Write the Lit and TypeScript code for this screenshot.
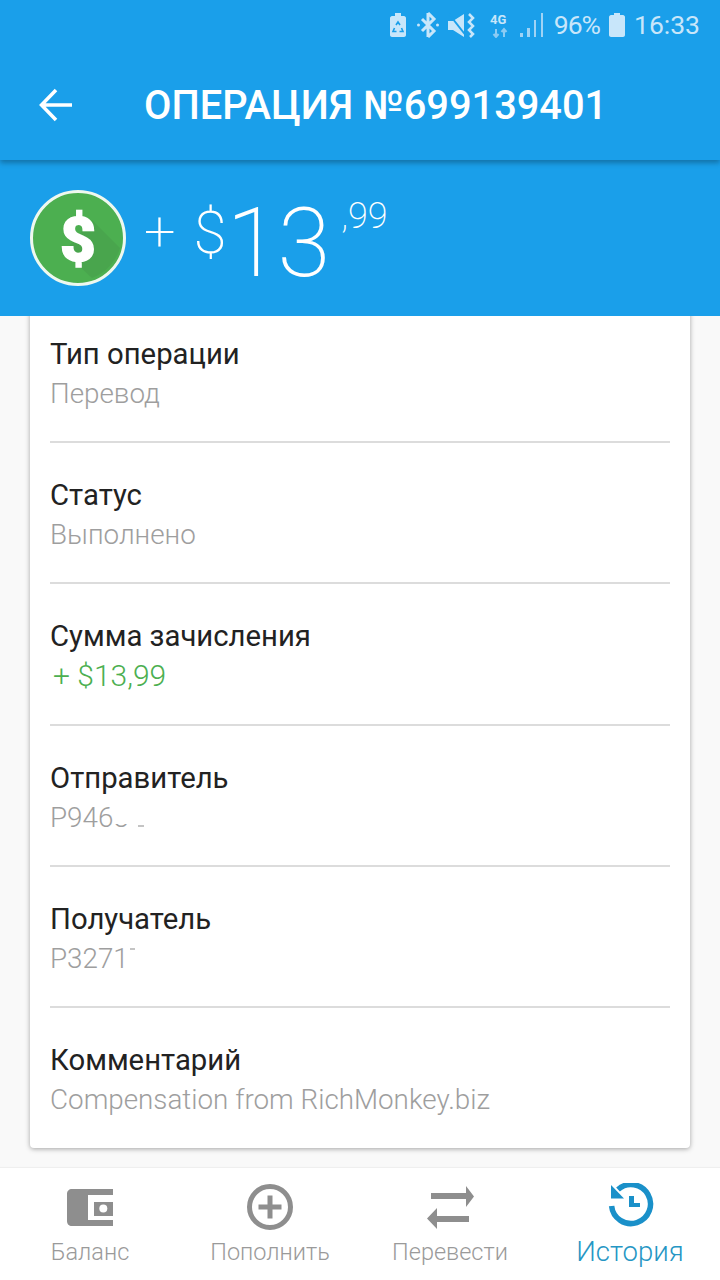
import { LitElement, html, css, svg } from 'lit';
import { customElement } from 'lit/decorators.js';

const rows = [
  { label: 'Тип операции', value: html`Перевод` },
  { label: 'Статус', value: html`Выполнено` },
  { label: 'Сумма зачисления', value: html`+ $13,99`, green: true },
  { label: 'Отправитель', value: html`P946<span class="cut-top">3</span><span class="dash"></span>` },
  { label: 'Получатель', value: html`P3271<span class="tick"></span>` },
  { label: 'Комментарий', value: html`Compensation from RichMonkey.biz` },
];

const tabs = [
  {
    label: 'Баланс',
    icon: svg`<path d="M9 6H50V12H25V37H50V43H9C6 43 4 41 4 38V11C4 8 6 6 9 6Z" fill="#8e8e8e"/><path d="M31 19H50V33H31Z" fill="#8e8e8e"/><circle cx="40.300" cy="25.500" r="4" fill="#fff"/>`,
  },
  {
    label: 'Пополнить',
    icon: svg`<circle cx="27" cy="24" r="20.500" fill="none" stroke="#8e8e8e" stroke-width="5"/><path d="M15.500 24H38.500M27 12.500V35.500" stroke="#8e8e8e" stroke-width="5"/>`,
  },
  {
    label: 'Перевести',
    icon: svg`<path d="M8 10H43V3L51 13.500 43 24V16H8Z" fill="#8e8e8e"/><path d="M46 33H14V25L4 35.500 14 46V39H46Z" fill="#8e8e8e"/>`,
  },
  {
    label: 'История',
    active: true,
    icon: svg`<path d="M15 6.500A19.500 19.500 0 1 1 8.600 23" fill="none" stroke="#1a90c9" stroke-width="5.500"/><path d="M8 2L21 15.500H8Z" fill="#1a90c9"/><path d="M26 13H31V20H37V24H26Z" fill="#1a90c9"/>`,
  },
];

@customElement('app-root')
export class AppRoot extends LitElement {
  static styles = css`
    :host {
      display: flex;
      flex-direction: column;
      height: 1280px;
      overflow: hidden;
      background: #f9f9f9;
      font-family: Roboto, sans-serif;
    }

    .top {
      position: relative;
      z-index: 2;
      height: 160px;
      flex: none;
      background: #1a9fea;
      box-shadow: 0 3px 5px rgba(0, 0, 0, 0.28);
    }

    .status {
      height: 50px;
      display: flex;
      align-items: center;
      justify-content: flex-end;
      padding-right: 20px;
      color: #c8e6fa;
      font-size: 26.500px;
      line-height: 50px;
    }

    .status svg {
      display: block;
      flex: none;
    }

    .status .pct {
      margin-left: 10px;
      letter-spacing: -1px;
    }

    .status .batt {
      margin: 0 9px;
    }

    .bar {
      height: 110px;
      display: flex;
      align-items: center;
      padding-left: 39px;
      color: #fff;
    }

    .bar h1 {
      margin: 0 0 0 71px;
      font-size: 39.800px;
      font-weight: 500;
      white-space: nowrap;
    }

    .sum {
      position: relative;
      z-index: 1;
      height: 156px;
      flex: none;
      display: flex;
      align-items: flex-start;
      padding: 30px 0 0 30px;
      background: #1a9fea;
      color: #fff;
      font-weight: 300;
      box-sizing: border-box;
    }

    .coin {
      display: block;
      flex: none;
    }

    .amount {
      display: flex;
      align-items: baseline;
      margin: 5px 0 0 18px;
      height: 96px;
      line-height: 96px;
      white-space: nowrap;
    }

    .plus {
      font-size: 56px;
      font-weight: 200;
      position: relative;
      top: -26px;
    }

    .cur {
      font-size: 60px;
      font-weight: 200;
      margin-left: 18px;
      position: relative;
      top: -23px;
    }

    .big {
      font-size: 96px;
      letter-spacing: -2px;
      font-weight: 200;
    }

    .cents {
      font-size: 36px;
      font-weight: 200;
      position: relative;
      top: -48px;
      margin-left: 13px;
    }

    main {
      flex: 1;
      min-height: 0;
      padding: 0 30px;
    }

    .card {
      margin-top: -16px;
      height: 848px;
      box-sizing: border-box;
      padding: 0 20px;
      background: #fff;
      border-radius: 4px;
      box-shadow: 0 1px 5px rgba(0, 0, 0, 0.35);
    }

    .row {
      height: 141.300px;
      box-sizing: border-box;
      padding-top: 32px;
      border-bottom: 2px solid #dcdcdc;
    }

    .row:first-child {
      height: 143px;
      padding-top: 34px;
    }

    .row:last-child {
      border-bottom: 0;
    }

    .label {
      font-size: 29.300px;
      line-height: 40px;
      color: #222;
    }

    .value {
      margin-top: 1px;
      font-size: 27.800px;
      line-height: 38px;
      font-weight: 300;
      color: #9e9e9e;
      white-space: nowrap;
    }

    .value.green {
      color: #4caf50;
      font-size: 30px;
      padding-left: 3px;
    }

    .cut-top {
      display: inline-block;
      position: relative;
      overflow: hidden;
      height: 38px;
      vertical-align: top;
    }

    .cut-top::before {
      content: '';
      position: absolute;
      left: 0;
      right: 0;
      top: 0;
      height: 25px;
      background: #fff;
    }

    .dash {
      display: inline-block;
      width: 6px;
      height: 2px;
      margin-left: 9px;
      background: #c4c4c4;
    }

    .tick {
      display: inline-block;
      width: 5px;
      height: 2px;
      margin-left: 1px;
      vertical-align: 18px;
      background: #c4c4c4;
    }

    nav {
      height: 112px;
      flex: none;
      display: grid;
      grid-template-columns: repeat(4, 1fr);
      background: #fff;
      box-shadow: 0 -1px 1px rgba(0, 0, 0, 0.04);
    }

    .tab {
      display: flex;
      flex-direction: column;
      align-items: center;
      padding-top: 15px;
      color: #9a9a9a;
      font-size: 23.500px;
      font-weight: 300;
      line-height: 34px;
      white-space: nowrap;
    }

    .tab svg {
      display: block;
      margin-bottom: 4px;
    }

    .tab.active {
      color: #2596c4;
      font-size: 27.500px;
      font-weight: 300;
    }
  `;

  private statusIcons() {
    return html`
      <svg width="16" height="24" viewBox="0 0 16 24">
        <path d="M5 0H11V3H14C15 3 16 4 16 5V22C16 23 15 24 14 24H2C1 24 0 23 0 22V5C0 4 1 3 2 3H5Z" fill="#c8e6fa"/>
        <path d="M6 12L8 9 10 12M11.500 15L13 18.500H9.500M6.500 18.500H3L4.500 15" fill="none" stroke="#1a9fea" stroke-width="1.600"/>
      </svg>
      <svg style="margin-left:11px" width="22" height="26" viewBox="0 0 22 26">
        <path d="M11 1L17 7 5 19M11 25L17 19 5 7M11 1V25" fill="none" stroke="#c8e6fa" stroke-width="3"/>
        <circle cx="1.500" cy="13" r="1.500" fill="#c8e6fa"/>
        <circle cx="20.500" cy="13" r="1.500" fill="#c8e6fa"/>
      </svg>
      <svg style="margin-left:9px" width="27" height="26" viewBox="0 0 27 26">
        <path d="M0 9H5L16 2V25L5 18H0Z" fill="#c8e6fa"/>
        <path d="M1 2L19 25" stroke="#1a9fea" stroke-width="2"/>
        <path d="M21 2L25 6 21 10 25 14 21 18 25 22 22 25" fill="none" stroke="#c8e6fa" stroke-width="2.500"/>
      </svg>
      <svg style="margin-left:15px" width="20" height="26" viewBox="0 0 20 26">
        <text x="0" y="12" font-family="Roboto" font-size="13" font-weight="700" fill="#c8e6fa">4G</text>
        <path d="M6 17V25M3.500 22L6 25 8.500 22" fill="none" stroke="#8ccbf3" stroke-width="2"/>
        <path d="M14 25V17M11.500 20L14 17 16.500 20" fill="none" stroke="#8ccbf3" stroke-width="2"/>
      </svg>
      <svg style="margin-left:10px" width="24" height="24" viewBox="0 0 24 24">
        <path d="M0 20H3V24H0ZM7 15H10V24H7ZM14 7H16V24H14ZM21 0H23V24H21Z" fill="#9fd3f5"/>
      </svg>
    `;
  }

  render() {
    return html`
      <div class="top">
        <div class="status">
          ${this.statusIcons()}
          <span class="pct">96%</span>
          <svg class="batt" width="16" height="24" viewBox="0 0 16 24">
            <path d="M5 0H11V2H14C15 2 16 3 16 4V22C16 23 15 24 14 24H2C1 24 0 23 0 22V4C0 3 1 2 2 2H5Z" fill="#c8e6fa"/>
          </svg>
          <span>16:33</span>
        </div>
        <div class="bar">
          <svg width="34" height="34" viewBox="0 0 34 34">
            <path d="M33 17H3M17 2L2.500 17 17 32" fill="none" stroke="#fff" stroke-width="3.500"/>
          </svg>
          <h1>ОПЕРАЦИЯ №699139401</h1>
        </div>
      </div>

      <div class="sum">
        <svg class="coin" width="96" height="96" viewBox="0 0 96 96">
          <circle cx="48" cy="48" r="46.500" fill="#4caf50" stroke="#eef8ef" stroke-width="3"/>
          <path d="M62 30L90 58A46 46 0 0 1 62 88L34 62Z" fill="#49a54d"/>
          <text x="48" y="71" text-anchor="middle" font-family="Roboto" font-size="62" font-weight="900" fill="#fff" stroke="#fff" stroke-width="1.500">$</text>
        </svg>
        <div class="amount">
          <span class="plus">+</span>
          <span class="cur">$</span>
          <span class="big">13</span>
          <span class="cents">,99</span>
        </div>
      </div>

      <main>
        <div class="card">
          ${rows.map(
            (r) => html`
              <div class="row">
                <div class="label">${r.label}</div>
                <div class="value ${r.green ? 'green' : ''}">${r.value}</div>
              </div>
            `
          )}
        </div>
      </main>

      <nav>
        ${tabs.map(
          (t) => html`
            <div class="tab ${t.active ? 'active' : ''}">
              <svg width="54" height="48" viewBox="0 0 54 48">${t.icon}</svg>
              <span>${t.label}</span>
            </div>
          `
        )}
      </nav>
    `;
  }
}

declare global {
  interface HTMLElementTagNameMap {
    'app-root': AppRoot;
  }
}
